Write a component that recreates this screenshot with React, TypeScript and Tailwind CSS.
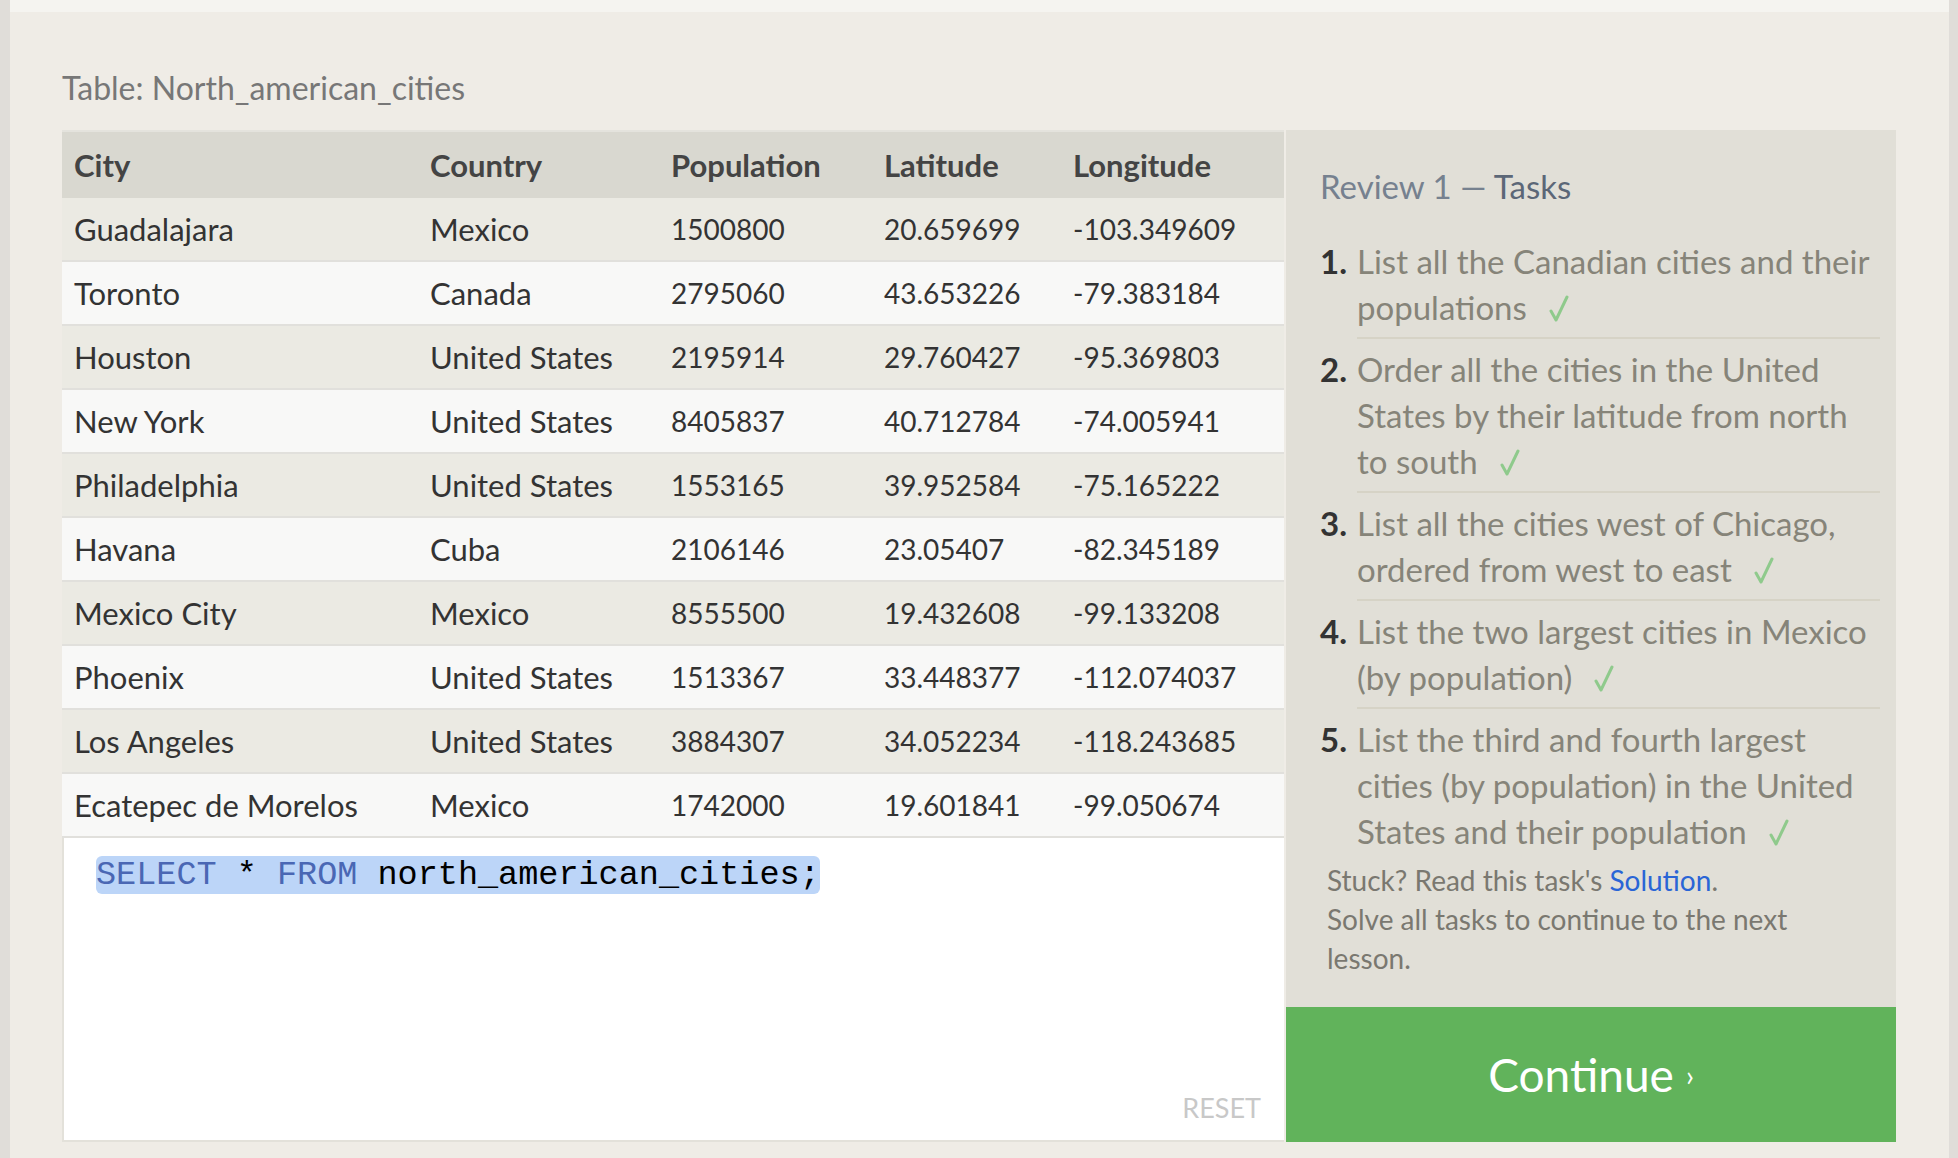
const rows = [
  ["Guadalajara", "Mexico", "1500800", "20.659699", "-103.349609"],
  ["Toronto", "Canada", "2795060", "43.653226", "-79.383184"],
  ["Houston", "United States", "2195914", "29.760427", "-95.369803"],
  ["New York", "United States", "8405837", "40.712784", "-74.005941"],
  ["Philadelphia", "United States", "1553165", "39.952584", "-75.165222"],
  ["Havana", "Cuba", "2106146", "23.05407", "-82.345189"],
  ["Mexico City", "Mexico", "8555500", "19.432608", "-99.133208"],
  ["Phoenix", "United States", "1513367", "33.448377", "-112.074037"],
  ["Los Angeles", "United States", "3884307", "34.052234", "-118.243685"],
  ["Ecatepec de Morelos", "Mexico", "1742000", "19.601841", "-99.050674"],
]

const tasks = [
  "List all the Canadian cities and their populations",
  "Order all the cities in the United States by their latitude from north to south",
  "List all the cities west of Chicago, ordered from west to east",
  "List the two largest cities in Mexico (by population)",
  "List the third and fourth largest cities (by population) in the United States and their population",
]

const cols = "grid grid-cols-[356px_241px_213px_189px_1fr]"

function Check() {
  return (
    <svg className="ml-[22px] inline-block align-[-2px]" width="20" height="27" viewBox="0 0 20 27" fill="none">
      <path d="M2 16 L7 25 L18 2" stroke="#8fca8c" strokeWidth="3" strokeLinecap="round" strokeLinejoin="round" />
    </svg>
  )
}

export default function App() {
  return (
    <div className="flex h-[1158px] bg-[#e0ddd9] font-['Lato',sans-serif]">
      <div className="w-[10px] shrink-0" />
      <div className="flex flex-1 flex-col">
        <div className="h-[12px] bg-[#f5f4f0]" />
        <div className="flex-1 bg-[#efece6] pl-[52px] pt-[58px]">
          <div className="text-[32px] leading-[36px] text-[#777]">Table: North_american_cities</div>

          <div className="mt-[24px] flex gap-[2px]">
            {/* table + editor */}
            <div className="flex w-[1222px] flex-col">
              <div className="border-t-2 border-[#e4e3dd]">
                <div className={`${cols} h-[66px] items-center bg-[#d9d8d0] text-[31px] font-bold text-[#444]`}>
                  {["City", "Country", "Population", "Latitude", "Longitude"].map((h) => (
                    <div key={h} className="px-3">{h}</div>
                  ))}
                </div>
                {rows.map((r, i) => (
                  <div
                    key={r[0]}
                    className={`${cols} h-[64px] items-center border-b-2 border-[#e1e0dc] text-[#333] ${i % 2 === 0 ? "bg-[#ebeae3]" : "bg-[#f8f8f7]"}`}
                  >
                    {r.map((c, j) => (
                      <div key={j} className={`whitespace-nowrap px-3 ${j < 2 ? "text-[31px]" : "text-[28px]"}`}>{c}</div>
                    ))}
                  </div>
                ))}
              </div>
              <div className="relative flex h-[304px] flex-col border-b-2 border-l-2 border-[#e3e1da] bg-white pl-[32px] pt-[18px]">
                <div className="self-start rounded-md bg-[#bcd5f8] font-['Liberation_Mono',monospace] text-[33.5px] leading-[38px]">
                  <span className="text-[#4a67b4]">SELECT</span> * <span className="text-[#4a67b4]">FROM</span> north_american_cities;
                </div>
                <div className="absolute bottom-[12px] right-[23px] text-[27px] text-[#c8c8c8]">RESET</div>
              </div>
            </div>

            {/* tasks panel */}
            <div className="flex w-[610px] flex-col">
              <div className="flex-1 bg-[#e1dfd7] pl-[34px] pt-[36px]">
                <div className="text-[33px] leading-[40px] text-[#76818f]">
                  Review 1 — <span className="text-[#5c6777]">Tasks</span>
                </div>
                <ol className="mt-[32px]">
                  {tasks.map((t, i) => (
                    <li key={t} className="flex text-[33px] leading-[46px]">
                      <span className="w-[37px] shrink-0 font-bold text-[#333]">{i + 1}.</span>
                      <div className={`w-[523px] pb-[7px] text-[#868479] ${i < tasks.length - 1 ? "mb-[7px] border-b-2 border-[#d6d3c6]" : ""}`}>
                        {t}
                        <Check />
                      </div>
                    </li>
                  ))}
                </ol>
                <div className="w-[500px] pl-[7px] text-[28px] leading-[39px] text-[#7a7870]">
                  <div>
                    Stuck? Read this task's <span className="text-[#2a65d6]">Solution</span>.
                  </div>
                  <div>Solve all tasks to continue to the next lesson.</div>
                </div>
              </div>
              <div className="flex h-[135px] items-center justify-center bg-[#61b35b] text-[46px] text-white">
                Continue <span className="ml-[12px] text-[28px]">›</span>
              </div>
            </div>
          </div>
        </div>
      </div>
      <div className="w-[9px] shrink-0" />
    </div>
  )
}
